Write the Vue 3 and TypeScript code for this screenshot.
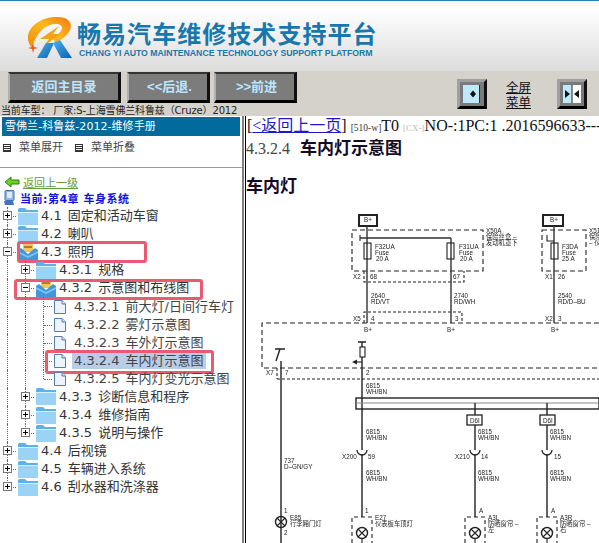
<script setup lang="ts">
interface TreeRow {
  text: string
  guides: boolean[]
  toggle?: '+' | '-'
  icon: 'folder' | 'open' | 'page'
  selected?: boolean
  mark?: 'a' | 'b' | 'c'
  last?: boolean
}

const rows: TreeRow[] = [
  { text: '4.1 固定和活动车窗', guides: [], toggle: '+', icon: 'folder' },
  { text: '4.2 喇叭', guides: [], toggle: '+', icon: 'folder' },
  { text: '4.3 照明', guides: [], toggle: '-', icon: 'open', mark: 'a' },
  { text: '4.3.1 规格', guides: [true], toggle: '+', icon: 'folder' },
  { text: '4.3.2 示意图和布线图', guides: [true], toggle: '-', icon: 'open', mark: 'b' },
  { text: '4.3.2.1 前大灯/日间行车灯', guides: [true, true], icon: 'page' },
  { text: '4.3.2.2 雾灯示意图', guides: [true, true], icon: 'page' },
  { text: '4.3.2.3 车外灯示意图', guides: [true, true], icon: 'page' },
  { text: '4.3.2.4 车内灯示意图', guides: [true, true], icon: 'page', selected: true, mark: 'c' },
  { text: '4.3.2.5 车内灯变光示意图', guides: [true, true], icon: 'page', last: true },
  { text: '4.3.3 诊断信息和程序', guides: [true], toggle: '+', icon: 'folder' },
  { text: '4.3.4 维修指南', guides: [true], toggle: '+', icon: 'folder' },
  { text: '4.3.5 说明与操作', guides: [true], toggle: '+', icon: 'folder', last: true },
  { text: '4.4 后视镜', guides: [], toggle: '+', icon: 'folder' },
  { text: '4.5 车辆进入系统', guides: [], toggle: '+', icon: 'folder' },
  { text: '4.6 刮水器和洗涤器', guides: [], toggle: '+', icon: 'folder', last: true },
]

// schematic labels, in page coordinates
const labels = [
  ['B+', 364, 222], ['B+', 550, 222],
  ['F32UA', 375, 249], ['Fuse', 375, 255], ['20 A', 376, 261],
  ['F31UA', 459, 249], ['Fuse', 459, 255], ['20 A', 460, 261],
  ['F3DA', 562, 249], ['Fuse', 562, 255], ['25 A', 562, 261],
  ['X50A', 486, 233], ['保险丝盒 –', 486, 239], ['发动机罩下', 486, 245],
  ['X51A', 589, 233], ['保险', 589, 239], ['– 仪', 589, 245],
  ['X2', 353, 279], ['68', 370, 279], ['67', 453, 279], ['X1', 545, 279], ['26', 558, 279],
  ['2640', 371, 298], ['RD/VT', 371, 304], ['2740', 454, 298], ['RD/WH', 454, 304],
  ['2540', 558, 298], ['RD/D–BU', 558, 304],
  ['X5', 353, 321], ['4', 371, 321], ['3', 455, 321], ['X2', 545, 321], ['3', 558, 321],
  ['B+', 364, 332], ['B+', 447, 332], ['B+', 551, 332],
  ['X7', 266, 375], ['7', 285, 375], ['2', 366, 375],
  ['6815', 366, 388], ['WH/BN', 366, 394],
  ['6815', 366, 434], ['WH/BN', 366, 440], ['6815', 478, 434], ['WH/BN', 478, 440],
  ['6815', 550, 434], ['WH/BN', 550, 440],
  ['X200', 342, 459], ['59', 368, 459], ['X210', 455, 459], ['14', 481, 459], ['15', 554, 459],
  ['6815', 366, 475], ['WH/BN', 366, 481], ['6815', 478, 475], ['WH/BN', 478, 481],
  ['6815', 550, 475], ['WH/BN', 550, 481],
  ['737', 284, 463], ['D–GN/GY', 284, 469],
  ['1', 284, 513], ['2', 284, 535], ['1', 365, 513], ['A', 479, 513], ['A', 551, 513],
  ['E85', 290, 520], ['行李厢门灯', 290, 526],
  ['E27', 375, 520], ['仪表板车顶灯', 375, 526],
  ['A3L', 488, 520], ['防晒窗帘 –', 488, 526], ['左', 488, 532],
  ['A3R', 560, 520], ['防晒窗帘 –', 560, 526], ['右', 560, 532],
  ['D6I', 470, 423], ['D6I', 543, 423],
] as [string, number, number][]

const fuses = [[364, 243], [447, 243], [551, 243]]
const lamps = [[281, 522], [362, 533], [475, 533], [547, 533]]
const cups = [362, 475, 547]
const tags = [467, 540]
</script>

<template>
  <div class="page">
    <header class="brand">
      <svg class="logo" viewBox="25 16 47 43" width="47" height="43">
        <defs>
          <linearGradient id="ring" x1="0" y1="1" x2="1" y2="0">
            <stop offset="0" stop-color="#f08a10" />
            <stop offset="0.55" stop-color="#fbb91c" />
            <stop offset="1" stop-color="#f07a12" />
          </linearGradient>
          <linearGradient id="leg" x1="0" y1="0" x2="1" y2="1">
            <stop offset="0" stop-color="#46b4ee" />
            <stop offset="1" stop-color="#0d5fa8" />
          </linearGradient>
        </defs>
        <path fill="url(#ring)" d="M32 48C20 34 36 17 56 17C69 16 74 24 69 32C66 37 60 41 55 42L52 37C57 35 62 32 62 28C62 24 56 23 50 25C41 28 35 37 32 48Z" />
        <path fill="#f6a414" d="M59 26L40 39L49 39L43 47L60 34L53 34Z" />
        <path fill="#f05a10" d="M33 43L34 47L38 48L34 49L33 53L32 49L28 48L32 47Z" />
        <path fill="url(#leg)" d="M46 43L54 43L47 58L37 58Z" />
        <path fill="url(#leg)" d="M53 43L60 40L72 58L61 58Z" />
      </svg>
      <div class="brand-text">
        <div class="brand-name">畅易汽车维修技术支持平台</div>
        <div class="brand-sub">CHANG YI AUTO MAINTENANCE TECHNOLOGY SUPPORT PLATFORM</div>
      </div>
    </header>

    <div class="toolbar">
      <div class="toolbar-left">
        <div class="buttons">
          <div class="btn btn-home">返回主目录</div>
          <div class="btn btn-nav">&lt;&lt;后退.</div>
          <div class="btn btn-nav">&gt;&gt;前进</div>
        </div>
        <div class="car">当前车型： 厂家:S-上海雪佛兰科鲁兹（Cruze）2012</div>
      </div>
      <div class="toolbar-right">
        <div class="tool">
          <svg viewBox="0 0 18 18" width="18" height="18">
            <rect width="17" height="18" fill="#bfe8fb" />
            <rect x="16" width="1" height="18" fill="#333" />
            <path d="M7 9L10 5.5L13 9L10 12.5Z" fill="#111" />
          </svg>
        </div>
        <div class="fullscreen">全屏<br />菜单</div>
        <div class="tool">
          <svg viewBox="0 0 18 18" width="18" height="18">
            <rect width="9" height="18" fill="#bfe8fb" />
            <rect x="9" width="9" height="18" fill="#fff" />
            <rect x="8.5" width="1" height="18" fill="#222" />
            <path d="M2 5L7 9L2 13Z" fill="#111" />
            <path d="M16 5L11 9L16 13Z" fill="#111" />
          </svg>
        </div>
      </div>
    </div>

    <div class="main">
      <aside class="side">
        <div class="side-title">雪佛兰-科鲁兹-2012-维修手册</div>
        <div class="menu">
          <span class="menu-item"><i class="menu-box"></i>菜单展开</span>
          <span class="menu-item"><i class="menu-box"></i>菜单折叠</span>
        </div>
        <div class="back">
          <svg viewBox="0 0 16 12" width="16" height="12">
            <path d="M1 6L7 1V4H15V8H7V11Z" fill="#6fd21c" stroke="#2f7d10" stroke-width="1" />
          </svg>
          <a class="back-link">返回上一级</a>
        </div>
        <div class="current">
          <svg viewBox="0 0 12 16" width="12" height="16">
            <rect x="2" y="0.5" width="9" height="10" rx="1" fill="#8fb6e8" stroke="#4a6fa8" />
            <rect x="4" y="2" width="5" height="6" fill="#dcebfb" />
            <path d="M1 11L10 11L11 15L2 15Z" fill="#3f74c0" />
          </svg>
          <b>当前:第4章 车身系统</b>
        </div>
        <div class="tree">
          <div v-for="row in rows" :key="row.text" class="row">
            <span v-for="(on, i) in row.guides" :key="i" class="cell" :class="{ guide: on }"></span>
            <span class="cell" :class="[row.toggle ? 'branch' : 'stub', { last: row.last }]">
              <i v-if="row.toggle" class="toggle" :class="row.toggle === '+' ? 'plus' : 'minus'"></i>
            </span>
            <svg v-if="row.icon === 'folder'" class="ico" viewBox="0 0 20 17" width="20" height="17">
              <path d="M0 1.5Q0 0 1.5 0H7L9 2H20V16.5H0Z" fill="#5eb0ea" />
              <path d="M0 4H20V17H0Z" fill="#9bd3f7" />
              <path d="M0 4H20V5H0Z" fill="#d8effc" />
            </svg>
            <svg v-else-if="row.icon === 'open'" class="ico" viewBox="0 0 20 17" width="20" height="17">
              <path d="M5 0H15V8H5Z" fill="#f4c454" />
              <path d="M6 2H14V4H6Z" fill="#b47c2a" />
              <path d="M0 6L3 4L10 10L17 4L20 6V17H0Z" fill="#3f97de" />
              <path d="M0 7L10 12L20 7V9L10 14L0 9Z" fill="#7fc3f2" />
            </svg>
            <svg v-else class="ico" viewBox="0 0 12 14" width="12" height="14">
              <path d="M0.5 0.5H8L11.5 4V13.5H0.5Z" fill="#eef4fc" stroke="#5a7aa8" />
              <path d="M8 0.5V4H11.5" fill="#cfe0f4" stroke="#5a7aa8" />
            </svg>
            <span class="label" :class="{ selected: row.selected, leaf: row.icon === 'page' }">{{ row.text }}</span>
            <span v-if="row.mark" class="mark" :class="'mark-' + row.mark"></span>
          </div>
        </div>
      </aside>

      <section class="content">
        <div class="line-top">
          [<a class="prev">&lt;返回上一页</a>]
          <small class="dim">[510-w]</small>T0
          <small class="faint">[CX-]</small>NO-:1PC:1 .2016596633---
        </div>
        <div class="crumb">4.3.2.4 <b>车内灯示意图</b></div>
        <div class="sub">车内灯</div>

        <svg class="schematic" viewBox="246 210 353 333" width="353" height="333">
          <g fill="none" stroke="#222" stroke-width="1.1">
            <rect x="359" y="215" width="18" height="11" stroke-width="2" />
            <rect x="543" y="215" width="20" height="11" stroke-width="2" />
            <g stroke-dasharray="5 3">
              <rect x="352" y="230" width="131" height="41" />
              <rect x="542" y="230" width="44" height="41" />
              <path d="M599 323H262V368H599" />
              <path d="M364 271V282H464V271M364 323V312H462V323" stroke-dasharray="3 2" />
            </g>
            <path d="M277 368V379M277 379H599" stroke-dasharray="3 2" />
            <path d="M367 226V323M451 238V323M554 226V323M360 238H451" stroke="#333" stroke-width="1.4" />
            <path d="M360 235V241M547 235V241H554" />
            <path d="M275 349H285M280 349L276 361M281 361V543" stroke-width="1.4" />
            <path d="M362 342V347M358 342H366M362 357V450M362 454V517" stroke-width="1.4" />
            <rect x="360" y="347" width="5" height="10" />
            <path d="M356 362H362" />
            <rect x="356" y="398" width="243" height="11" stroke-width="1.4" />
            <path d="M356 403H599" stroke="#888" />
            <path d="M475 403V415M547 403V415M475 425V450M547 425V450M475 454V517M547 454V517" stroke-width="1.4" />
            <rect v-for="f in fuses" :key="f[0]" :x="f[0]" :y="f[1]" width="7" height="16" />
            <rect v-for="x in tags" :key="x" :x="x" y="415" width="15" height="10" stroke-width="1.3" />
            <path v-for="x in cups" :key="x" :d="`M${x - 5} 450a5 5 0 0 0 10 0`" stroke-width="1.3" />
            <g v-for="l in lamps" :key="l[0]">
              <circle :cx="l[0]" :cy="l[1]" r="5.5" stroke-width="1.4" />
              <path :d="`M${l[0] - 4} ${l[1] - 4}l8 8m0 -8l-8 8`" />
            </g>
            <path d="M362 539V543M475 539V543M547 539V543" />
            <g stroke-dasharray="4 3">
              <path d="M352 543V517H372V543M465 543V517H485V543M537 543V517H557V543" />
            </g>
          </g>
          <path d="M352 362L357 359.5V364.5Z" fill="#222" />
          <text v-for="(t, i) in labels" :key="i" :x="t[1]" :y="t[2]" class="tag">{{ t[0] }}</text>
        </svg>
      </section>
    </div>
  </div>
</template>

<style scoped>
.page {
  width: 599px;
  height: 543px;
  overflow: hidden;
  background: #fff;
  font-family: "DejaVu Sans", "Noto Sans CJK SC", sans-serif;
}

.brand {
  height: 70px;
  border-top: 1px solid #2a7fb0;
  background: linear-gradient(#f6f6f6, #fff 12%, #dcdcdc);
  display: flex;
  padding-left: 25px;
}

.logo {
  margin-top: 15px;
}

.brand-text {
  margin-left: 5px;
  padding-top: 17px;
}

.brand-name {
  font-family: "Noto Sans CJK SC", sans-serif;
  font-size: 24px;
  font-weight: 700;
  line-height: 30px;
  letter-spacing: 1.05px;
  color: #1877ad;
  white-space: nowrap;
}

.brand-sub {
  font-family: "Liberation Sans", sans-serif;
  font-size: 8.7px;
  font-weight: 700;
  line-height: 11px;
  margin-left: 2px;
  color: #1877ad;
  white-space: nowrap;
}

.toolbar {
  height: 45px;
  background: #d5d2cc;
  display: flex;
  justify-content: space-between;
}

.buttons {
  display: flex;
  padding: 1px 0 0 8px;
  gap: 4px;
}

.btn {
  height: 31px;
  box-sizing: border-box;
  padding-bottom: 3px;
  border-style: solid;
  border-width: 2px 3px 3px 2px;
  border-color: #333 #111 #000 #b0b0b0;
  background: #7c7c7c;
  color: #bde6ff;
  font-size: 13px;
  font-weight: 700;
  font-family: "Noto Sans CJK SC", sans-serif;
  display: flex;
  align-items: center;
  justify-content: center;
}

.btn-home {
  width: 113px;
  margin-right: 2px;
}

.btn-nav {
  width: 83px;
  padding-left: 3px;
  font-family: "Liberation Sans", "Noto Sans CJK SC", sans-serif;
}

.car {
  margin: 2px 0 0 1px;
  font-size: 10px;
  line-height: 12px;
  letter-spacing: -0.15px;
  color: #222;
  white-space: nowrap;
}

.toolbar-right {
  display: flex;
  align-items: center;
  padding: 8px 12px 7px 0;
  height: 30px;
}

.tool {
  width: 30px;
  height: 30px;
  box-sizing: border-box;
  padding: 3px;
  border-style: solid;
  border-width: 3px;
  border-color: #a0a0a0 #111 #000 #a0a0a0;
  background: #7a7a7a;
  display: flex;
}

.tool svg {
  display: block;
}

.fullscreen {
  width: 70px;
  box-sizing: border-box;
  padding-right: 7px;
  text-align: center;
  font-family: "Noto Sans CJK SC", sans-serif;
  font-size: 12.5px;
  line-height: 15px;
  text-decoration: underline;
  color: #111;
}

.main {
  display: flex;
  height: 427px;
}

.side {
  width: 242px;
  flex: none;
  border-right: 2px solid #7f7f7f;
  overflow: hidden;
}

.side-title {
  margin: 1px 2px 0 2px;
  height: 19px;
  padding-left: 3px;
  background: #006b9c;
  color: #fff;
  font-size: 11px;
  letter-spacing: 0.05px;
  line-height: 19px;
  white-space: nowrap;
}

.menu {
  height: 26px;
  border-bottom: 1px solid #999;
  display: flex;
  padding: 5px 0 0 3px;
  gap: 12px;
  font-size: 11px;
  color: #444;
  line-height: 14px;
}

.menu-item {
  display: flex;
  align-items: center;
  height: 14px;
}

.menu-box {
  width: 6px;
  height: 6px;
  border: 1px solid #333;
  margin-right: 8px;
  background: linear-gradient(#333 1px, #fff 1px) 0 1px / 100% 2px;
}

.back {
  display: flex;
  align-items: center;
  height: 16px;
  margin-top: 6px;
  padding-left: 4px;
  gap: 3px;
}

.back-link {
  font-size: 11px;
  color: #5f9c3c;
  text-decoration: underline;
}

.current {
  display: flex;
  align-items: center;
  height: 16px;
  padding-left: 3px;
  gap: 5px;
  font-size: 11px;
  letter-spacing: 0.5px;
  color: #1212dc;
}

.tree {
  margin-left: -2px;
  padding-top: 1px;
}

.row {
  position: relative;
  display: flex;
  align-items: center;
  height: 18.1px;
}

.cell {
  flex: none;
  width: 18px;
  height: 100%;
  position: relative;
}

.guide::before,
.branch::before,
.stub::before {
  content: "";
  position: absolute;
  left: 9px;
  top: 0;
  bottom: 0;
  border-left: 1px dotted #666;
}

.last::before {
  bottom: 50%;
}

.stub::after,
.branch::after {
  content: "";
  position: absolute;
  left: 10px;
  right: 0;
  top: 9px;
  border-top: 1px dotted #666;
}

.toggle {
  position: absolute;
  z-index: 1;
  left: 5px;
  top: 4px;
  width: 7px;
  height: 7px;
  border: 1px solid #777;
  background: #fff;
}

.toggle::before {
  content: "";
  position: absolute;
  left: 1px;
  right: 1px;
  top: 3px;
  height: 1px;
  background: #000;
}

.plus::after {
  content: "";
  position: absolute;
  top: 1px;
  bottom: 1px;
  left: 3px;
  width: 1px;
  background: #000;
}

.ico {
  flex: none;
  margin-left: 2px;
}

.label {
  margin-left: 3px;
  font-size: 13px;
  line-height: 16px;
  word-spacing: 2px;
  color: #333;
  white-space: nowrap;
}

.label.leaf {
  margin-left: 6px;
  padding: 0 2px;
  color: #444;
}

.label.selected {
  background: #b8cde8;
}

.mark {
  position: absolute;
  border: 3px solid #ea5a72;
  border-radius: 3px;
  pointer-events: none;
}

.mark-a {
  left: 19px;
  top: -2px;
  width: 124px;
  height: 16px;
}

.mark-b {
  left: 16px;
  top: 0;
  width: 183px;
  height: 15px;
}

.mark-c {
  left: 47px;
  top: -2px;
  width: 163px;
  height: 18px;
}

.content {
  flex: 1;
  min-width: 0;
  margin-left: 1px;
  border-left: 1px solid #000;
  overflow: hidden;
  font-family: "Liberation Serif", "Noto Sans CJK SC", serif;
  font-size: 16px;
  color: #111;
}

.line-top {
  height: 19px;
  line-height: 19px;
  padding-left: 1px;
  white-space: nowrap;
}

.prev {
  color: #1a1acc;
  text-decoration: underline;
}

.dim {
  font-size: 9.5px;
  color: #333;
}

.faint {
  font-size: 9px;
  color: #bbb;
}

.crumb {
  height: 24px;
  line-height: 24px;
  color: #444;
}

.crumb b,
.sub {
  font-family: "Noto Sans CJK SC", sans-serif;
  font-size: 17px;
  font-weight: 700;
  color: #140a24;
}

.crumb b {
  margin-left: 6px;
}

.sub {
  margin-top: 17px;
  height: 17px;
  line-height: 17px;
}

.schematic {
  display: block;
  margin-top: 17px;
  filter: blur(0.35px);
}

.tag {
  font-family: "Liberation Sans", "Noto Sans CJK SC", sans-serif;
  font-size: 6.3px;
  fill: #222;
}
</style>

<style>
body {
  margin: 0;
  overflow: hidden;
}
</style>
